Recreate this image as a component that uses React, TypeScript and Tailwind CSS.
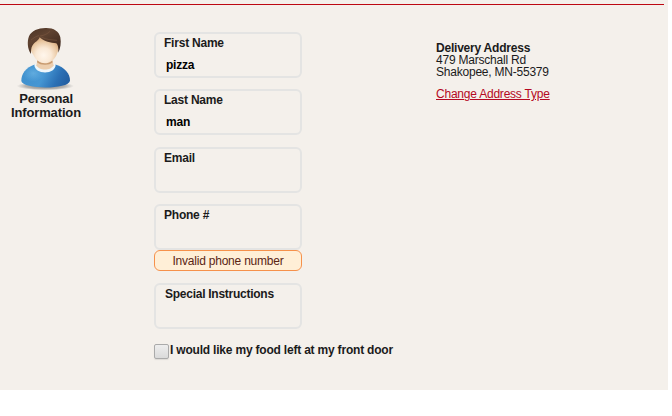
import React from "react";

function PersonIcon() {
  return (
    <svg width="66" height="68" viewBox="0 0 198 204" className="block">
      <defs>
        <linearGradient id="shirt" x1="0" y1="0.2" x2="1" y2="0.45">
          <stop offset="0" stopColor="#3f90cd" />
          <stop offset="0.5" stopColor="#4596d3" />
          <stop offset="0.8" stopColor="#2b70b5" />
          <stop offset="1" stopColor="#2461a4" />
        </linearGradient>
        <radialGradient id="shine" cx="0.5" cy="0.5" r="0.5">
          <stop offset="0" stopColor="#79bfea" stopOpacity="0.55" />
          <stop offset="1" stopColor="#79bfea" stopOpacity="0" />
        </radialGradient>
        <radialGradient id="face" cx="0.47" cy="0.72" r="0.65">
          <stop offset="0" stopColor="#fff6ec" />
          <stop offset="0.4" stopColor="#fae9d6" />
          <stop offset="0.75" stopColor="#e8c6a0" />
          <stop offset="1" stopColor="#cf9f73" />
        </radialGradient>
        <linearGradient id="hair" x1="0" y1="0" x2="0.7" y2="1">
          <stop offset="0" stopColor="#493224" />
          <stop offset="0.4" stopColor="#604331" />
          <stop offset="1" stopColor="#3b261b" />
        </linearGradient>
        <radialGradient id="shadow" cx="0.5" cy="0.5" r="0.5">
          <stop offset="0" stopColor="#555" stopOpacity="0.8" />
          <stop offset="0.7" stopColor="#777" stopOpacity="0.5" />
          <stop offset="1" stopColor="#888" stopOpacity="0" />
        </radialGradient>
      </defs>
      <ellipse cx="94" cy="186" rx="86" ry="13" fill="url(#shadow)" />
      <path d="M22 171C22 149 34 132 64 121L122 121C153 130 168 149 168 170C165 197 26 197 22 171Z" fill="url(#shirt)" />
      <ellipse cx="58" cy="148" rx="32" ry="25" fill="url(#shine)" />
      <path d="M61 121C60 154 126 154 125 121L113 117L73 117Z" fill="#edf6fb" />
      <path d="M72 103L67 124C74 141 112 141 119 124L113 103Z" fill="#ecceae" />
      <path d="M71 107C80 116 104 116 114 107L116 115C107 125 79 125 69 115Z" fill="#c89b70" />
      <path d="M48 58C46 70 51 84 57 91C65 109 79 118 92 118C107 118 123 107 129 89C137 75 137 58 131 43L72 32Z" fill="url(#face)" />
      <path d="M51 90C40 75 39 52 45 37C52 20 73 12 94 12C118 11 135 21 139 40C142 57 139 74 133 86C134 72 132 63 127 58C110 57 91 53 77 40C74 50 61 55 55 65C51 72 51 81 51 90Z" fill="url(#hair)" />
      <path d="M51 48C59 42 67 36 75 35M78 36C92 34 100 30 108 22M82 39C97 48 113 47 129 49" fill="none" stroke="#7b573f" strokeWidth="3" opacity="0.6" />
    </svg>
  );
}

function Field({ label, value = "", labelClass = "" }: { label: string; value?: string; labelClass?: string }) {
  return (
    <div className="h-[46px] w-[148px] rounded-md border-2 border-[#e4e4e3] px-2 pt-[2px] font-bold">
      <div className={`h-[23px] leading-[14px] ${labelClass}`}>{label}</div>
      <div className="pl-[2px] leading-[13px] text-black">{value}</div>
    </div>
  );
}

export default function App() {
  return (
    <main className="h-[416px] w-[672px] bg-white font-['Liberation_Sans',Arial,sans-serif] text-[12px] tracking-[-0.22px] text-[#1b1b1b]">
      <section className="h-[390px] w-[668px] bg-[#f4f0eb] pt-1">
        <div className="h-px w-[664px] bg-[#bd0712]" />
        <div className="flex">
          <div className="flex w-[154px] flex-col pt-[19px]">
            <div className="pl-[14px]"><PersonIcon /></div>
            <div className="w-[92px] text-center text-[13px] leading-[14px] font-bold tracking-[-0.15px]">
              Personal<br />Information
            </div>
          </div>
          <div className="flex w-[282px] flex-col pt-[27px]">
            <Field label="First Name" value="pizza" />
            <div className="mt-[11px]"><Field label="Last Name" value="man" /></div>
            <div className="mt-3"><Field label="Email" /></div>
            <div className="mt-[11px]"><Field label="Phone #" /></div>
            <div className="h-[21px] w-[148px] rounded-md border border-[#f6914b] bg-[#ffefd7] text-center leading-[20px] text-[#5b2414]">Invalid phone number</div>
            <div className="mt-3"><Field label="Special Instructions" labelClass="pl-px tracking-[-0.26px]" /></div>
            <label className="mt-[14px] flex h-[16px] items-start gap-px whitespace-nowrap font-bold">
              <input type="checkbox" className="mt-px size-[15px] shrink-0 appearance-none rounded-[2px] border border-[#aaa] bg-linear-to-b from-[#eee] to-[#dadada] shadow-[0_1px_1px_#dedbd7]" />
              <span className="leading-[14px] tracking-[-0.2px]">I would like my food left at my front door</span>
            </label>
          </div>
          <div className="pt-[37px] leading-[12px]">
            <div className="font-bold">Delivery Address</div>
            <div>479 Marschall Rd</div>
            <div>Shakopee, MN-55379</div>
            <a href="#" className="mt-[10px] block text-[#b50923] underline">Change Address Type</a>
          </div>
        </div>
      </section>
    </main>
  );
}
